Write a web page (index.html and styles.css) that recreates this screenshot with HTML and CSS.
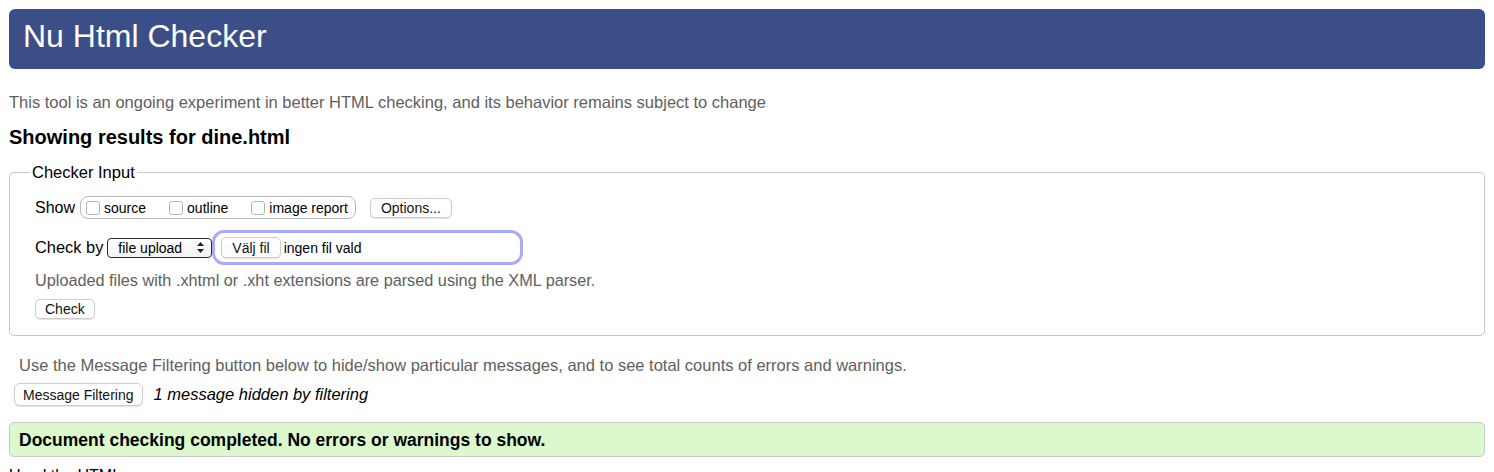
FILE: index.html
```html
<!DOCTYPE html>
<html lang="en">
<head>
  <meta charset="UTF-8" />
  <meta name="viewport" content="width=device-width, initial-scale=1.0" />
  <title>Showing results for dine.html - Nu Html Checker</title>
  <link rel="stylesheet" href="styles.css">
</head>
<body>

  <h1 class="title-bar">Nu Html Checker</h1>
  <p class="intro">This tool is an ongoing experiment in better HTML checking, and its behavior remains subject to change</p>
  <h2 class="results-title">Showing results for dine.html</h2>

  <form class="checker-form">
    <fieldset class="checker-input">
      <legend>Checker Input</legend>

      <div class="row show-row">
        <span class="row-label">Show</span>
        <span class="show-group">
          <label class="check-label"><input type="checkbox" class="check-box" />source</label>
          <label class="check-label"><input type="checkbox" class="check-box" />outline</label>
          <label class="check-label"><input type="checkbox" class="check-box" />image report</label>
        </span>
        <button type="button" class="btn options-btn">Options...</button>
      </div>

      <div class="row checkby-row">
        <span class="row-label">Check by</span>
        <span class="fake-select">file upload
          <svg class="select-arrows" width="7" height="11" viewBox="0 0 7 11">
            <path d="M3.5 0 L7 4 L0 4 Z M3.5 11 L7 7 L0 7 Z" fill="#222"/>
          </svg>
        </span>
        <span class="file-field">
          <span class="btn file-btn">Välj fil</span>
          <span class="file-name">ingen fil vald</span>
        </span>
      </div>

      <p class="upload-note">Uploaded files with .xhtml or .xht extensions are parsed using the XML parser.</p>

      <button type="button" class="btn check-btn">Check</button>
    </fieldset>
  </form>

  <p class="filter-note">Use the Message Filtering button below to hide/show particular messages, and to see total counts of errors and warnings.</p>
  <div class="filter-row">
    <button type="button" class="btn filter-btn">Message Filtering</button>
    <em class="filter-count">1 message hidden by filtering</em>
  </div>

  <p class="success">Document checking completed. No errors or warnings to show.</p>

  <p class="parser-note">Used the HTML parser.</p>

</body>
</html>
```

FILE: styles.css
```css
body {
  font-family: "Liberation Sans", Arial, sans-serif;
  font-size: 16px;
  margin: 9px;
  color: #000;
  background: #fff;
}

.title-bar {
  margin: 0;
  height: 60px;
  box-sizing: border-box;
  padding: 9px 14px 0;
  font-size: 32px;
  font-weight: normal;
  line-height: 37px;
  color: #fff;
  background: #3c4e88;
  border-radius: 6px;
}

.intro {
  margin: 23px 0 0;
  font-size: 16.5px;
  line-height: 20px;
  color: #606060;
}

.results-title {
  margin: 13px 0 14px;
  font-size: 20px;
  line-height: 24px;
}

.checker-form {
  margin: 0;
}

.checker-input {
  margin: 0;
  padding: 15px 10px 16px 20px;
  border: 1px solid #c8c8c8;
  border-radius: 5px;
}

.checker-input legend {
  padding: 0 2px;
  font-size: 16.5px;
  line-height: 18px;
}

.row {
  display: flex;
  align-items: center;
  padding-left: 5px;
}

.show-row {
  height: 23px;
}

.checkby-row {
  height: 35px;
  margin-top: 11px;
}

.row-label {
  margin-right: 5px;
  line-height: 18px;
}

.checkby-row .row-label {
  font-size: 16.4px;
  margin-bottom: 1px;
  margin-right: 4px;
}

.show-group {
  display: flex;
  align-items: center;
  height: 23px;
  box-sizing: border-box;
  padding: 0 7px 0 5px;
  border: 1px solid #b9b9b9;
  border-radius: 8px;
  font-size: 14px;
}

.check-label {
  display: flex;
  align-items: center;
  margin-right: 23px;
}

.check-label:last-child {
  margin-right: 0;
}

.check-box {
  appearance: none;
  width: 14px;
  height: 14px;
  margin: 0 4px 0 0;
  border: 1px solid #b4b4b4;
  border-radius: 3px;
  background: #fff;
}

.btn {
  display: inline-flex;
  align-items: center;
  justify-content: center;
  box-sizing: border-box;
  font-family: inherit;
  font-size: 14px;
  color: #111;
  background: #fff;
  border: 1px solid #cdcdcd;
  border-radius: 5px;
  box-shadow: 0 1px 1px rgba(0, 0, 0, 0.12);
  cursor: pointer;
}

.options-btn {
  margin-left: 14px;
  height: 20px;
  padding: 0 10px;
}

.fake-select {
  display: inline-flex;
  align-items: center;
  box-sizing: border-box;
  width: 105px;
  height: 20px;
  padding: 0 0 0 10px;
  font-size: 14px;
  border: 1px solid #2a2a2a;
  border-radius: 4px;
  background: linear-gradient(#fff, #f3f3f3);
}

.select-arrows {
  margin-left: auto;
  margin-right: 7px;
}

.file-field {
  display: flex;
  align-items: center;
  box-sizing: border-box;
  width: 311px;
  height: 35px;
  padding-left: 6px;
  border: 3px solid #a9acf4;
  border-radius: 12px;
  font-size: 14px;
}

.file-btn {
  height: 21px;
  padding: 0 10px;
  margin-right: 3px;
}

.upload-note {
  margin: 6px 0 0;
  padding-left: 5px;
  font-size: 16.25px;
  line-height: 18px;
  color: #606060;
}

.check-btn {
  margin: 10px 0 0 5px;
  height: 20px;
  padding: 0 9px;
}

.filter-note {
  margin: 20px 0 0;
  padding-left: 10px;
  font-size: 16.5px;
  line-height: 18px;
  color: #606060;
}

.filter-row {
  display: flex;
  align-items: baseline;
  margin-top: 9px;
  padding-left: 5px;
}

.filter-btn {
  height: 23px;
  padding: 0 8px;
  border-radius: 6px;
  margin-right: 11px;
}

.filter-count {
  font-style: italic;
  font-size: 16.5px;
}

.success {
  margin: 16px 0 0;
  height: 35px;
  box-sizing: border-box;
  padding: 8px 9px 0;
  font-size: 17.5px;
  line-height: 18px;
  font-weight: bold;
  background: #dbf9cd;
  border: 1px solid #c8c8c8;
  border-radius: 5px;
}

.parser-note {
  margin: 10px 0 0;
  line-height: 18px;
}
```
